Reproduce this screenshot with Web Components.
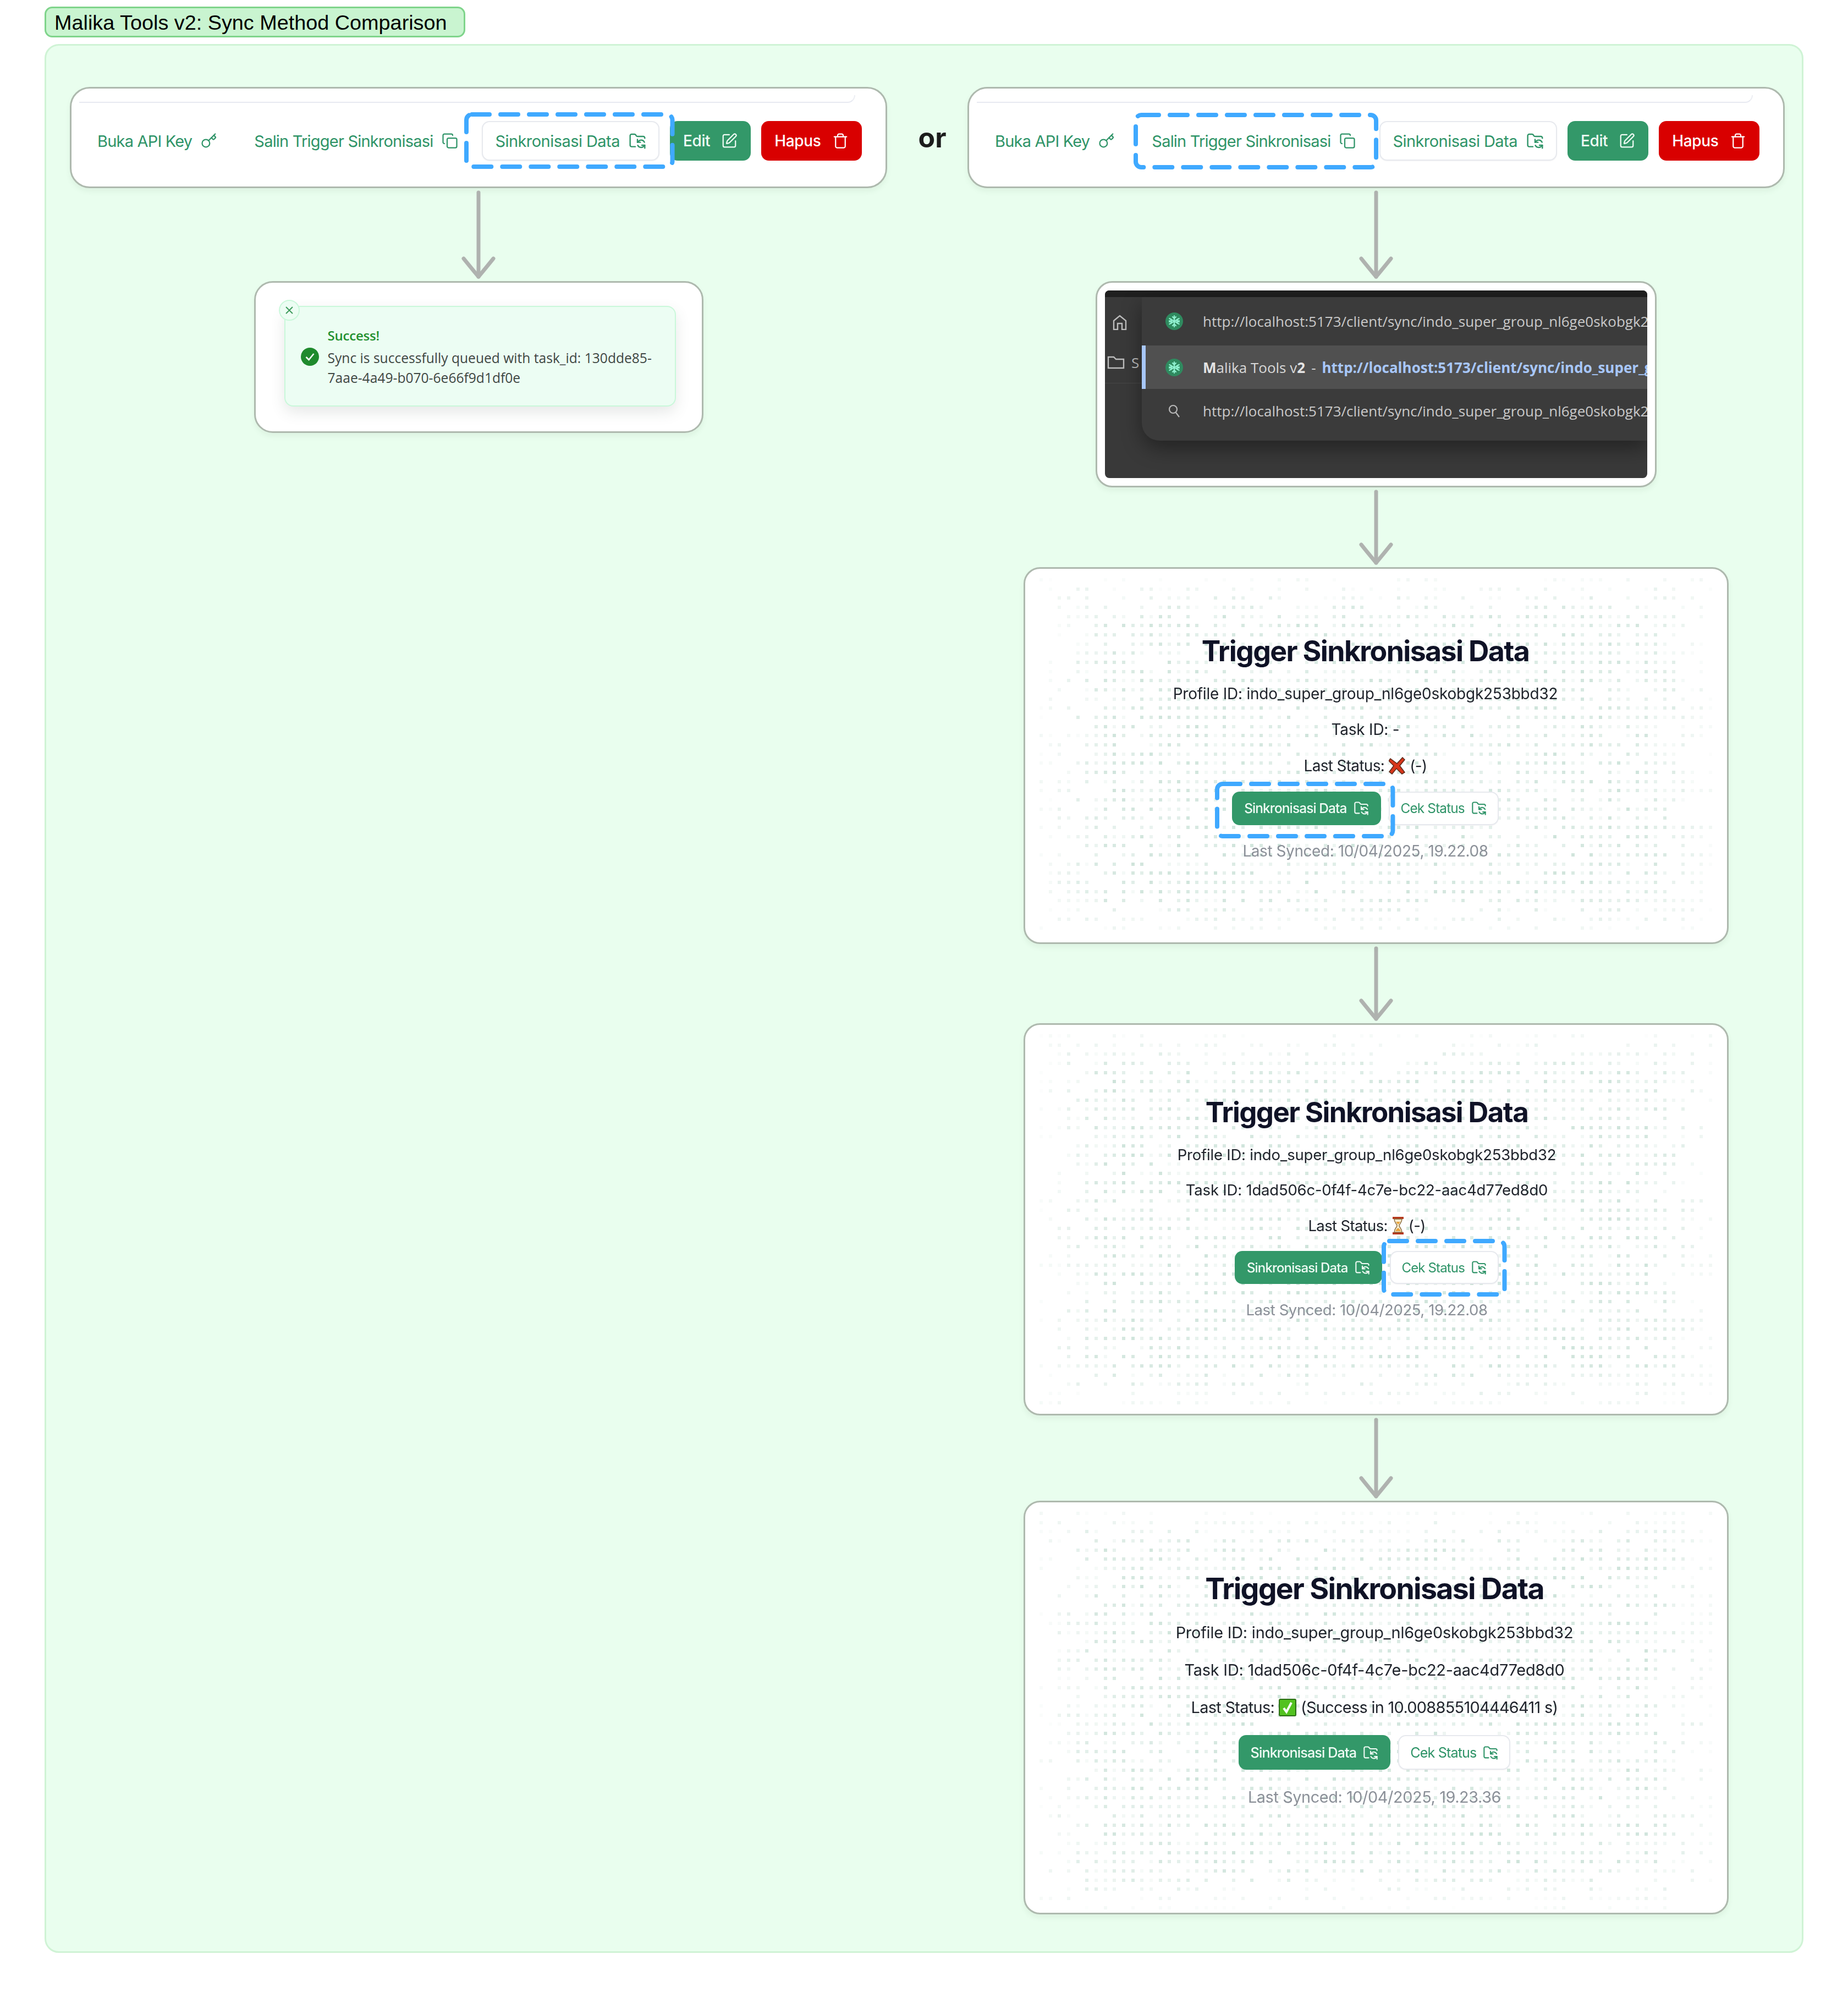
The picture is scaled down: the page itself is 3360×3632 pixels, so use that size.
<!DOCTYPE html>
<html lang="en">
<head>
<meta charset="utf-8">
<title>Malika Tools v2: Sync Method Comparison</title>
<style>
  html, body { margin: 0; background: #fff; }
  body { font-family: Inter, "Liberation Sans", sans-serif; width: 3360px; height: 3632px; overflow: hidden; }
</style>
</head>
<body>
<flow-page>
  <flow-column slot="left">
    <flow-card radius="36" style="width:1486px">
      <action-bar highlight="sync"></action-bar>
    </flow-card>
    <flow-arrow height="169"></flow-arrow>
    <flow-card radius="34" style="width:817px">
      <success-toast></success-toast>
    </flow-card>
  </flow-column>
  <or-label slot="or"></or-label>
  <flow-column slot="right">
    <flow-card radius="36" style="width:1486px">
      <action-bar highlight="copy"></action-bar>
    </flow-card>
    <flow-arrow height="169"></flow-arrow>
    <flow-card radius="30" style="width:1020px">
      <omnibox-shot></omnibox-shot>
    </flow-card>
    <flow-arrow height="145"></flow-arrow>
    <trigger-card seed="11" profile="indo_super_group_nl6ge0skobgk253bbd32" task="-" status="cross" status-text="(-)" synced="10/04/2025, 19.22.08" dash="sync"
      style="--h:685px;--pad:119px;--shift:39px;--gap:29.5px;--k:1.016"></trigger-card>
    <flow-arrow height="144"></flow-arrow>
    <trigger-card seed="23" profile="indo_super_group_nl6ge0skobgk253bbd32" task="1dad506c-0f4f-4c7e-bc22-aac4d77ed8d0" status="glass" status-text="(-)" synced="10/04/2025, 19.22.08" dash="cek"
      style="--h:713px;--pad:129px;--shift:34px;--gap:28.5px;--k:1"></trigger-card>
    <flow-arrow height="155"></flow-arrow>
    <trigger-card seed="37" profile="indo_super_group_nl6ge0skobgk253bbd32" task="1dad506c-0f4f-4c7e-bc22-aac4d77ed8d0" status="check" status-text="(Success in 10.008855104446411 s)" synced="10/04/2025, 19.23.36"
      style="--h:752px;--pad:127px;--shift:6px;--gap:32px;--k:1.05"></trigger-card>
  </flow-column>
</flow-page>

<script>
const ICONS = {
  key: '<path d="m15.5 7.5 2.3 2.3a1 1 0 0 0 1.4 0l2.1-2.1a1 1 0 0 0 0-1.4L19 4"/><path d="m21 2-9.6 9.6"/><circle cx="7.5" cy="15.5" r="5.5"/>',
  copy: '<rect width="14" height="14" x="8" y="8" rx="2"/><path d="M4 16c-1.1 0-2-.9-2-2V4c0-1.1.9-2 2-2h10c1.1 0 2 .9 2 2"/>',
  sync: '<path d="M9 20H4a2 2 0 0 1-2-2V5a2 2 0 0 1 2-2h3.9a2 2 0 0 1 1.69.9l.81 1.2a2 2 0 0 0 1.67.9H20a2 2 0 0 1 2 2v.5"/><path d="M12 10v4h4"/><path d="m12 14 1.535-1.605a5 5 0 0 1 8 1.5"/><path d="M22 22v-4h-4"/><path d="m22 18-1.535 1.605a5 5 0 0 1-8-1.5"/>',
  edit: '<path d="M12 3H5a2 2 0 0 0-2 2v14a2 2 0 0 0 2 2h14a2 2 0 0 0 2-2v-7"/><path d="M18.375 2.625a1 1 0 0 1 3 3l-9.013 9.014a2 2 0 0 1-.853.505l-2.873.84a.5.5 0 0 1-.62-.62l.84-2.873a2 2 0 0 1 .506-.852z"/>',
  trash: '<path d="M3 6h18"/><path d="M19 6v14c0 1-1 2-2 2H7c-1 0-2-1-2-2V6"/><path d="M8 6V4c0-1 1-2 2-2h4c1 0 2 1 2 2v2"/>',
};

const STATUS = {
  cross: '<svg width="30" height="32" viewBox="0 0 30 32"><path d="M3 3 15 12 25 1 29 5 20 16 29 28 24 31 14 21 6 31 1 27 9 16 0 7z" fill="#d8361a" stroke="#5a2a1a" stroke-width="1.5"/></svg>',
  glass: '<svg width="22" height="34" viewBox="0 0 22 34"><rect x="1" y="1" width="20" height="4" fill="#b5391c"/><rect x="1" y="29" width="20" height="4" fill="#b5391c"/><path d="M4 5h14c0 7-5 9-5 12s5 5 5 12H4c0-7 5-9 5-12S4 12 4 5z" fill="#f6ecd0" stroke="#8a6a3a" stroke-width="1.4"/><path d="M6 27c1-3 4-5 5-6 1 1 4 3 5 6z" fill="#e8a33a"/><path d="M7 10h8l-4 5z" fill="#e8a33a"/></svg>',
  check: '<svg width="32" height="32" viewBox="0 0 32 32"><rect x="1" y="1" width="30" height="30" rx="2" fill="#52c21f" stroke="#2c6e17" stroke-width="2"/><path d="M9 17l5 7L23 7" fill="none" stroke="#fff" stroke-width="4"/></svg>',
};

function icon(name, size) {
  return `<svg width="${size}" height="${size}" viewBox="0 0 24 24" fill="none" stroke="currentColor" stroke-width="1.8" stroke-linecap="round" stroke-linejoin="round">${ICONS[name]}</svg>`;
}

class FlowPage extends HTMLElement {
  constructor() {
    super();
    this.attachShadow({ mode: 'open' }).innerHTML = `
      <style>
        :host { display: block; padding-top: 12px; }
        .chip {
          box-sizing: border-box; width: 765px; height: 56px; margin-left: 81px;
          display: flex; align-items: center; padding: 3px 0 0 15px;
          background: #c9f4d0; border: 3px solid #7fd48b; border-radius: 14px;
          font: 37.8px "Liberation Sans", Arial, sans-serif; color: #000;
        }
        .panel {
          box-sizing: border-box; width: 3198px; height: 3470px; margin: 12px 0 0 81px;
          padding: 75px 31px 0 43px;
          background: #e9feee; border: 3px solid #cff3d5; border-radius: 26px;
          display: grid; grid-template-columns: 1486px 146px 1486px; align-items: start;
        }
      </style>
      <div class="chip">Malika Tools v2: Sync Method Comparison</div>
      <div class="panel">
        <slot name="left"></slot>
        <slot name="or"></slot>
        <slot name="right"></slot>
      </div>`;
  }
}

class FlowColumn extends HTMLElement {
  constructor() {
    super();
    this.attachShadow({ mode: 'open' }).innerHTML = `
      <style>:host { display: flex; flex-direction: column; align-items: center; }</style>
      <slot></slot>`;
  }
}

class OrLabel extends HTMLElement {
  constructor() {
    super();
    this.attachShadow({ mode: 'open' }).innerHTML = `
      <style>
        :host { display: block; height: 184px; padding-left: 18px; text-align: center;
          font: 700 50px/184px Inter, "Liberation Sans", sans-serif; color: #1c1c1c; }
      </style>or`;
  }
}

class FlowCard extends HTMLElement {
  constructor() {
    super();
    const r = this.getAttribute('radius') || 32;
    this.attachShadow({ mode: 'open' }).innerHTML = `
      <style>
        :host { display: block; box-sizing: border-box; background: #fff;
          border: 3px solid #aeb9ae; border-radius: ${r}px;
          box-shadow: 0 6px 10px rgba(90, 110, 90, .08); }
      </style>
      <slot></slot>`;
  }
}

class FlowArrow extends HTMLElement {
  constructor() {
    super();
    const h = Number(this.getAttribute('height'));
    const end = h - 8;
    this.attachShadow({ mode: 'open' }).innerHTML = `
      <style>:host { display: block; width: 62px; height: ${h}px; } svg { display: block; }</style>
      <svg width="62" height="${h}" fill="none" stroke="#afb2af" stroke-width="7" stroke-linecap="round" stroke-linejoin="round">
        <path d="M31 8V${end}"/>
        <path d="M4 ${end - 33}Q16 ${end - 18} 31 ${end}Q46 ${end - 18} 58 ${end - 33}"/>
      </svg>`;
  }
}

const btnTemplate = document.createElement('template');
btnTemplate.innerHTML = `
  <style>
    :host { display: block; position: relative; flex: none; }
    :host([dash]) { z-index: 2; }
    .btn {
      box-sizing: border-box; height: var(--btn-h, 72px); padding: 0 var(--btn-px, 22px);
      display: flex; align-items: center; gap: var(--btn-gap, 16px);
      border: 2px solid transparent; border-radius: 14px;
      font-family: Inter, "Liberation Sans", sans-serif;
      font-size: var(--btn-fs, 29px); font-weight: 400; letter-spacing: var(--btn-ls, -.8px); white-space: nowrap;
      color: #2f9468;
    }
    svg { flex: none; display: block; }
    :host([variant=outline]) .btn { background: #fff; border-color: #e7e9ee; box-shadow: 0 1px 2px rgba(0,0,0,.05); }
    :host([variant=primary]) .btn { background: #339869; color: #eefaf3; font-weight: 500; }
    :host([variant=danger]) .btn { background: #d90000; color: #fff; font-weight: 500; }
    .dash { position: absolute; pointer-events: none; overflow: visible; }
    .dash rect { width: calc(100% - 8px); height: calc(100% - 8px); }
  </style>
  <div class="btn"><slot></slot><span class="ic"></span></div>`;

class SyncBtn extends HTMLElement {
  constructor() {
    super();
    const root = this.attachShadow({ mode: 'open' });
    root.appendChild(btnTemplate.content.cloneNode(true));
    const size = this.getAttribute('icon-size') || 32;
    root.querySelector('.ic').innerHTML = icon(this.getAttribute('icon'), size);
    root.querySelector('.ic').style.display = 'block';
    const dash = this.getAttribute('dash');
    if (dash) {
      const [t, r, b, l] = dash.split(' ');
      root.querySelector('.btn').insertAdjacentHTML('afterend', `
        <svg class="dash" style="top:-${t}px;right:-${r}px;bottom:-${b}px;left:-${l}px;width:calc(100% + ${Number(l) + Number(r)}px);height:calc(100% + ${Number(t) + Number(b)}px)">
          <rect x="4" y="4" rx="10" fill="none" stroke="#3fa9ff" stroke-width="8" stroke-linecap="round" stroke-dasharray="32 20"/>
        </svg>`);
    }
  }
}

class ActionBar extends HTMLElement {
  constructor() {
    super();
    const hi = this.getAttribute('highlight');
    this.attachShadow({ mode: 'open' }).innerHTML = `
      <style>
        :host { display: block; box-sizing: border-box; height: 178px; padding-top: 12px; }
        .rule { box-sizing: border-box; width: 1411px; height: 14px; margin-left: 14px;
          border-bottom: 2px solid #e7e9f1; border-right: 2px solid #eceef3; border-bottom-right-radius: 14px; }
        .row { display: flex; gap: 19px; margin: 33px 0 0 23px; }
        .wide { --btn-ls: -.55px; }
        .solid { --btn-fs: 28px; --btn-ls: -.35px; --btn-gap: 20px; }
      </style>
      <div class="rule"></div>
      <div class="row">
        <sync-btn icon="key" icon-size="30">Buka API Key</sync-btn>
        <sync-btn icon="copy" icon-size="30" ${hi === 'copy' ? 'dash="15 17 16 9"' : ''}>Salin Trigger Sinkronisasi</sync-btn>
        <sync-btn class="wide" icon="sync" variant="outline" ${hi === 'sync' ? 'dash="16 28 15 32"' : ''}>Sinkronisasi Data</sync-btn>
        <sync-btn class="solid" icon="edit" icon-size="30" variant="primary">Edit</sync-btn>
        <sync-btn class="solid" icon="trash" icon-size="30" variant="danger">Hapus</sync-btn>
      </div>`;
  }
}

class SuccessToast extends HTMLElement {
  constructor() {
    super();
    this.attachShadow({ mode: 'open' }).innerHTML = `
      <style>
        :host { display: block; height: 270px; box-sizing: border-box; padding: 42px 47px 0 52px;
          font-family: "Open Sans", "Liberation Sans", sans-serif; }
        .toast { position: relative; box-sizing: border-box; height: 183px; padding: 39px 30px 0 77px;
          background: #ecfdf3; border: 2px solid #c9f8da; border-radius: 16px;
          box-shadow: 0 10px 26px rgba(60, 80, 70, .13); }
        .close { position: absolute; left: -12px; top: -13px; width: 38px; height: 38px; box-sizing: border-box;
          display: flex; align-items: center; justify-content: center;
          background: #ecfdf3; border: 2px solid #c9f8da; border-radius: 50%; }
        .check { position: absolute; left: 28px; top: 74px; display: block; }
        h4 { margin: 0 0 10px; font-size: 24px; line-height: 26px; font-weight: 600; color: #23902f; letter-spacing: -.2px; }
        p { margin: 0; font-size: 24.6px; line-height: 36px; color: #3f4743; }
      </style>
      <div class="toast">
        <div class="close"><svg width="16" height="16" viewBox="0 0 16 16" fill="none" stroke="#3e9b5c" stroke-width="2"><path d="M2 2l12 12M14 2 2 14"/></svg></div>
        <svg class="check" width="33" height="33" viewBox="0 0 33 33"><circle cx="16.5" cy="16.5" r="16.5" fill="#1f8a2d"/><path d="M9.5 17l5 5 9-11" fill="none" stroke="#fff" stroke-width="2.6"/></svg>
        <h4>Success!</h4>
        <p>Sync is successfully queued with task_id: 130dde85-7aae-4a49-b070-6e66f9d1df0e</p>
      </div>`;
  }
}

function favicon() {
  return `<svg class="fav" width="32" height="32" viewBox="0 0 32 32"><circle cx="16" cy="16" r="16" fill="#2f8a5f"/>
    <g stroke="#8ff0cf" stroke-width="2.2" stroke-linecap="round" fill="none">
      <path d="M16 6v20M7.3 11l17.4 10M24.7 11 7.3 21"/>
      <path d="M13 8l3 3 3-3M13 24l3-3 3 3M7 15l4 1-1-4M25 15l-4 1 1-4M7 17l4-1-1 4M25 17l-4-1 1 4"/>
    </g></svg>`;
}

class OmniboxShot extends HTMLElement {
  constructor() {
    super();
    const url = 'http://localhost:5173/client/sync/indo_super_group_nl6ge0skobgk253bbd32';
    this.attachShadow({ mode: 'open' }).innerHTML = `
      <style>
        :host { display: block; box-sizing: border-box; height: 369px; padding: 14px 14px 14px; }
        .shot { position: relative; height: 341px; overflow: hidden; border-radius: 8px; background: #393939;
          font-family: "Open Sans", "Liberation Sans", sans-serif; font-size: 26px; color: #c9c9c9; }
        .top { height: 12px; background: #1f1f1f; }
        .rail { width: 67px; height: 157px; box-sizing: border-box; padding-top: 32px; border-bottom: 1px solid #474747; color: #bdbdbd; }
        .rail svg { display: block; }
        .home { margin-left: 14px; }
        .folder { display: flex; align-items: center; gap: 12px; margin: 46px 0 0 4px; font-size: 26px; line-height: 26px; }
        .pop { position: absolute; left: 67px; right: 0; top: 12px; height: 261px; background: #3b3b3b;
          border-bottom-left-radius: 32px; box-shadow: 0 14px 36px rgba(0,0,0,.38); }
        .row { display: flex; align-items: center; gap: 36px; padding-left: 43px; height: 80px; white-space: nowrap; overflow: hidden; }
        .row:first-child { height: 88px; }
        .row.on { height: 79px; background: #505050; box-shadow: inset 7px 0 #a8c7fa; color: #d8d8d8; }
        .fav, .mag { flex: none; display: block; }
        b { font-weight: 700; color: #e4e4e4; }
        .sep { margin: 0 11px; }
        .blue { color: #a8c7fa; font-weight: 700; }
      </style>
      <div class="shot">
        <div class="top"></div>
        <div class="rail">
          <svg class="home" width="26" height="28" viewBox="0 0 26 28" fill="none" stroke="currentColor" stroke-width="2.4"><path d="M2 27V11L13 2l11 9v16h-7V16H9v11z"/></svg>
          <div class="folder">
            <svg width="32" height="24" viewBox="0 0 32 24" fill="none" stroke="currentColor" stroke-width="2.4"><path d="M2 2h10l4 4h14v16H2z"/></svg>
            <span>S</span>
          </div>
        </div>
        <div class="pop">
          <div class="row">${favicon()}<span>${url}</span></div>
          <div class="row on">${favicon()}<span><b>M</b>alika Tools v<b>2</b><span class="sep">-</span><span class="blue">${url}</span></span></div>
          <div class="row">
            <svg class="mag" width="32" height="28" viewBox="0 0 32 28" fill="none" stroke="#b8b8b8" stroke-width="2.2"><circle cx="14" cy="11" r="7"/><path d="M19 17l6 8"/></svg>
            <span>${url}</span>
          </div>
        </div>
      </div>`;
  }
}

class TriggerCard extends HTMLElement {
  constructor() {
    super();
    const a = (n) => this.getAttribute(n);
    const dash = a('dash');
    this.attachShadow({ mode: 'open' }).innerHTML = `
      <style>
        :host { display: block; position: relative; box-sizing: border-box; width: 1282px; height: var(--h);
          padding: var(--pad) var(--shift) 0 0; background: #fff;
          border: 3px solid #aeb9ae; border-radius: 30px; box-shadow: 0 6px 10px rgba(90,110,90,.08);
          font-family: Inter, "Liberation Sans", sans-serif; color: #20242c;
          --btn-h: calc(60px * var(--k)); --btn-fs: calc(24px * var(--k)); --btn-ls: calc(-.85px * var(--k));
          --btn-px: 20px; --btn-gap: 12px; }
        canvas { position: absolute; left: 0; top: 0; border-radius: 27px; }
        .body { position: relative; display: flex; flex-direction: column; align-items: center; gap: var(--gap); }
        h2 { margin: 0; line-height: 60px; font-size: calc(51px * var(--k)); font-weight: 700; letter-spacing: calc(-1.6px * var(--k)); color: #0f1226; }
        p { margin: 0; display: flex; align-items: center; gap: 8px; height: 36px; line-height: 36px;
          font-size: calc(27.5px * var(--k)); letter-spacing: calc(-.2px * var(--k)); }
        .status { letter-spacing: calc(-.65px * var(--k)); }
        .btns { display: flex; gap: 14px; }
        .synced { color: #8b9098; letter-spacing: calc(-.4px * var(--k)); }
      </style>
      <canvas></canvas>
      <div class="body">
        <h2>Trigger Sinkronisasi Data</h2>
        <p>Profile ID: ${a('profile')}</p>
        <p>Task ID: ${a('task')}</p>
        <p class="status">Last Status: ${STATUS[a('status')]} ${a('status-text')}</p>
        <div class="btns">
          <sync-btn icon="sync" icon-size="28" variant="primary" ${dash === 'sync' ? 'dash="18 26 24 31"' : ''}>Sinkronisasi Data</sync-btn>
          <sync-btn icon="sync" icon-size="28" variant="outline" ${dash === 'cek' ? 'dash="22 14 23 15"' : ''}>Cek Status</sync-btn>
        </div>
        <p class="synced">Last Synced: ${a('synced')}</p>
      </div>`;
  }

  connectedCallback() {
    const w = 1276;
    const h = parseInt(this.style.getPropertyValue('--h'), 10) - 6;
    const c = this.shadowRoot.querySelector('canvas');
    c.width = w;
    c.height = h;
    const g = c.getContext('2d');
    let s = Number(this.getAttribute('seed'));
    const rnd = () => { s = (s * 16807) % 2147483647; return s / 2147483647; };
    for (let y = 17; y < h - 12; y += 16.67) {
      for (let x = 26; x < w - 20; x += 16.67) {
        const ex = Math.min(x, w - x) / 170;
        const ey = Math.min(y, h - y) / 100;
        const fade = Math.min(1, Math.min(ex, ey) + .12);
        if (rnd() > .2 + .62 * fade) continue;
        g.fillStyle = `rgba(175, 210, 195, ${(.12 + rnd() * .48) * fade})`;
        g.fillRect(Math.round(x), Math.round(y), 6, 6);
      }
    }
  }
}

customElements.define('flow-page', FlowPage);
customElements.define('flow-column', FlowColumn);
customElements.define('or-label', OrLabel);
customElements.define('flow-card', FlowCard);
customElements.define('flow-arrow', FlowArrow);
customElements.define('sync-btn', SyncBtn);
customElements.define('action-bar', ActionBar);
customElements.define('success-toast', SuccessToast);
customElements.define('omnibox-shot', OmniboxShot);
customElements.define('trigger-card', TriggerCard);
</script>
</body>
</html>
